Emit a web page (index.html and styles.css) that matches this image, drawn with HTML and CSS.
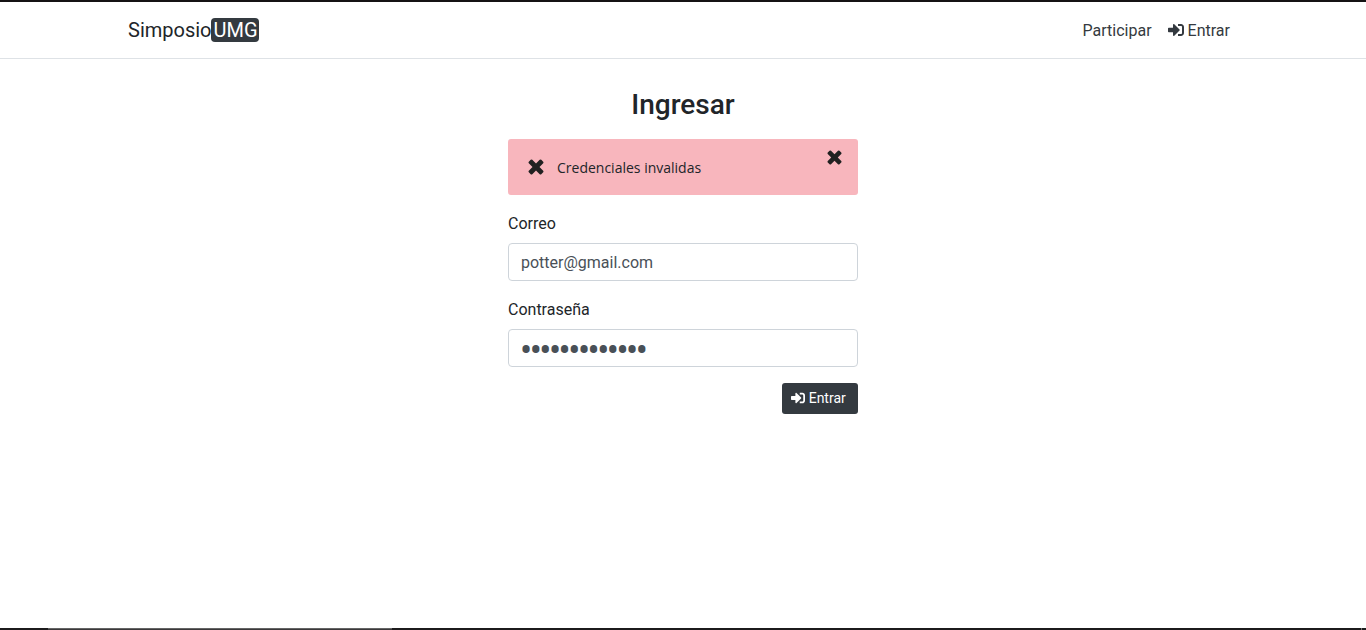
FILE: index.html
```html
<!DOCTYPE html>
<html lang="es">
<head>
<meta charset="utf-8">
<title>Simposio UMG</title>
<link rel="stylesheet" href="styles.css">
</head>
<body>
<svg width="0" height="0" class="defs">
  <symbol id="login" viewBox="0 0 512 512"><path d="M416 448h-84c-6.600 0-12-5.400-12-12v-40c0-6.600 5.400-12 12-12h84c17.700 0 32-14.300 32-32V160c0-17.700-14.300-32-32-32h-84c-6.600 0-12-5.400-12-12V76c0-6.600 5.400-12 12-12h84c53 0 96 43 96 96v192c0 53-43 96-96 96zm-47-209L201 71c-15-15-41-4.500-41 17v96H24c-13.300 0-24 10.700-24 24v96c0 13.300 10.700 24 24 24h136v96c0 21.500 26 32 41 17l168-168c9.300-9.400 9.300-24.600 0-34z"/></symbol>
  <symbol id="cross" viewBox="0 0 16 16"><path d="M2.700 .8Q3.500 .1 4.300 .8L8 4.500 11.700 .8Q12.500 .1 13.300 .8L15.200 2.700Q15.900 3.500 15.200 4.300L11.500 8 15.200 11.700Q15.900 12.500 15.200 13.300L13.300 15.200Q12.500 15.900 11.700 15.200L8 11.500 4.300 15.200Q3.500 15.900 2.700 15.200L.8 13.300Q.1 12.500 .8 11.700L4.500 8 .8 4.300Q.1 3.500 .8 2.700Z"/></symbol>
</svg>
<header class="navbar">
  <a class="brand">Simposio<span class="brand-tag">UMG</span></a>
  <nav class="links">
    <a>Participar</a>
    <a><svg class="icon"><use href="#login"/></svg> Entrar</a>
  </nav>
</header>
<main class="login">
  <h1>Ingresar</h1>
  <div class="alert">
    <svg class="alert-icon"><use href="#cross"/></svg>
    <span class="alert-text">Credenciales invalidas</span>
    <svg class="alert-close"><use href="#cross"/></svg>
  </div>
  <label for="correo">Correo</label>
  <input id="correo" type="text" value="potter@gmail.com">
  <label for="clave">Contraseña</label>
  <input id="clave" class="password" type="password" value="contrasena123">
  <button class="submit"><svg class="icon"><use href="#login"/></svg> Entrar</button>
</main>
<footer class="edge"><span class="edge-thumb"></span><span class="edge-mark"></span></footer>
</body>
</html>
```
FILE: styles.css
```css
* { box-sizing: border-box; }
body {
  margin: 0;
  height: 630px;
  display: flex;
  flex-direction: column;
  overflow: hidden;
  background: #fff;
  color: #212529;
  font: 400 16px/24px Roboto, sans-serif;
}
.defs { position: absolute; }
.navbar {
  height: 59px;
  border-top: 2px solid #151314;
  border-bottom: 1px solid #dee2e6;
  padding: 0 136px 0 128px;
  display: flex;
  justify-content: space-between;
  align-items: center;
}
.brand { font-size: 20px; line-height: 30px; }
.brand-tag {
  display: inline-block;
  height: 24px;
  margin-left: -1px;
  line-height: 24px;
  padding: 0 1px 0 3px;
  border-radius: 4px;
  background: #343a40;
  color: #fff;
}
.links { display: flex; gap: 16px; padding-top: 2px; color: #343a40; }
.icon { width: 1em; height: 1em; fill: currentColor; vertical-align: -0.125em; }
.login {
  width: 350px;
  margin: 29px auto 0;
  display: flex;
  flex-direction: column;
}
h1 {
  margin: 0 0 17px;
  font-size: 28px;
  line-height: 34px;
  font-weight: 500;
  text-align: center;
}
.alert {
  height: 56px;
  margin-bottom: 17px;
  padding: 0 16px 0 20px;
  display: flex;
  align-items: center;
  border-radius: 3px;
  background: #f8b6bd;
}
.alert-icon { width: 16px; height: 16px; fill: #212121; }
.alert-text {
  margin: 2px auto 0 13px;
  font: 14px/20px "Open Sans", sans-serif;
}
.alert-close { width: 15px; height: 15px; margin-top: -19px; fill: #212121; }
label { margin-bottom: 7px; }
input {
  width: 100%;
  height: 38px;
  margin: 0 0 17px;
  padding: 6px 12px;
  border: 1px solid #ced4da;
  border-radius: 4px;
  background: #fff;
  color: #495057;
  font: 16px/24px Roboto, sans-serif;
}
.password {
  margin-bottom: 16px;
  padding: 5px 11px 0;
  font-size: 36px;
  line-height: 31px;
  letter-spacing: -2.5px;
}
.submit {
  align-self: flex-end;
  width: 76px;
  height: 31px;
  padding: 0 3px 0 0;
  border: 0;
  border-radius: 3px;
  background: #343a40;
  color: #fff;
  font: 14px/21px Roboto, sans-serif;
}
.edge {
  height: 2px;
  margin-top: auto;
  padding: 0 4px 0 48px;
  display: flex;
  justify-content: space-between;
  background: #1c1b1c;
}
.edge-thumb { width: 344px; border-top: 1px solid #656565; background: #3b393a; }
.edge-mark { width: 1px; background: #777; }
```
